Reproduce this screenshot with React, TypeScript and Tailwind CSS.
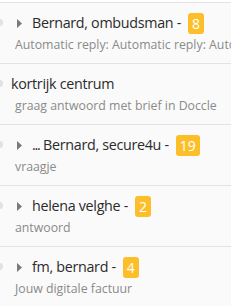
import React from "react";

type Row = { pre?: string; title: string; count?: number; sub: string; caret: boolean };

const rows: Row[] = [
  { title: "Bernard, ombudsman -", count: 8, sub: "Automatic reply: Automatic reply: Automatic reply", caret: true },
  { title: "kortrijk centrum", sub: "graag antwoord met brief in Doccle", caret: false },
  { pre: "...", title: " Bernard, secure4u -", count: 19, sub: "vraagje", caret: true },
  { title: "helena velghe -", count: 2, sub: "antwoord", caret: true },
  { title: "fm, bernard -", count: 4, sub: "Jouw digitale factuur", caret: true },
];

export default function App() {
  return (
    <div className="w-[231px] h-[306px] overflow-hidden bg-white pt-[2px]" style={{ fontFamily: '"Open Sans", "Noto Sans", sans-serif' }}>
      {rows.map((r, i) => (
        <div key={i} className="relative h-[61px] border-t border-[#e3e3e3] bg-[#fafafa] overflow-hidden">
          <div className="absolute left-[-4px] top-[16px] w-[7px] h-[7px] rounded-full bg-[#e2e2e2]" />
          <div className={`flex items-center h-[20px] mt-[10px] ${r.caret ? "pl-[17px]" : "pl-[11px]"}`}>
            {r.caret && (
              <svg width="5" height="9" viewBox="0 0 5 9" className="mr-[10px] shrink-0">
                <path d="M0 0 L5 4.5 L0 9 Z" fill="#7a7a7a" />
              </svg>
            )}
            <span className="text-[14.3px] tracking-[-0.3px] text-[#2b2b2b] whitespace-nowrap leading-[20px]">
              {r.pre && <span className="tracking-[-1.2px]">{r.pre}</span>}
              {r.title}
            </span>
            {r.count !== undefined && (
              <span className="ml-[7px] h-[21px] px-[4px] rounded-[3px] bg-[#fcbf2a] text-white text-[14px] leading-[21px]">{r.count}</span>
            )}
          </div>
          <div className="pl-[15px] mt-[4px] text-[12.3px] text-[#8a8a8a] whitespace-nowrap leading-[16px]">{r.sub}</div>
        </div>
      ))}
    </div>
  );
}
